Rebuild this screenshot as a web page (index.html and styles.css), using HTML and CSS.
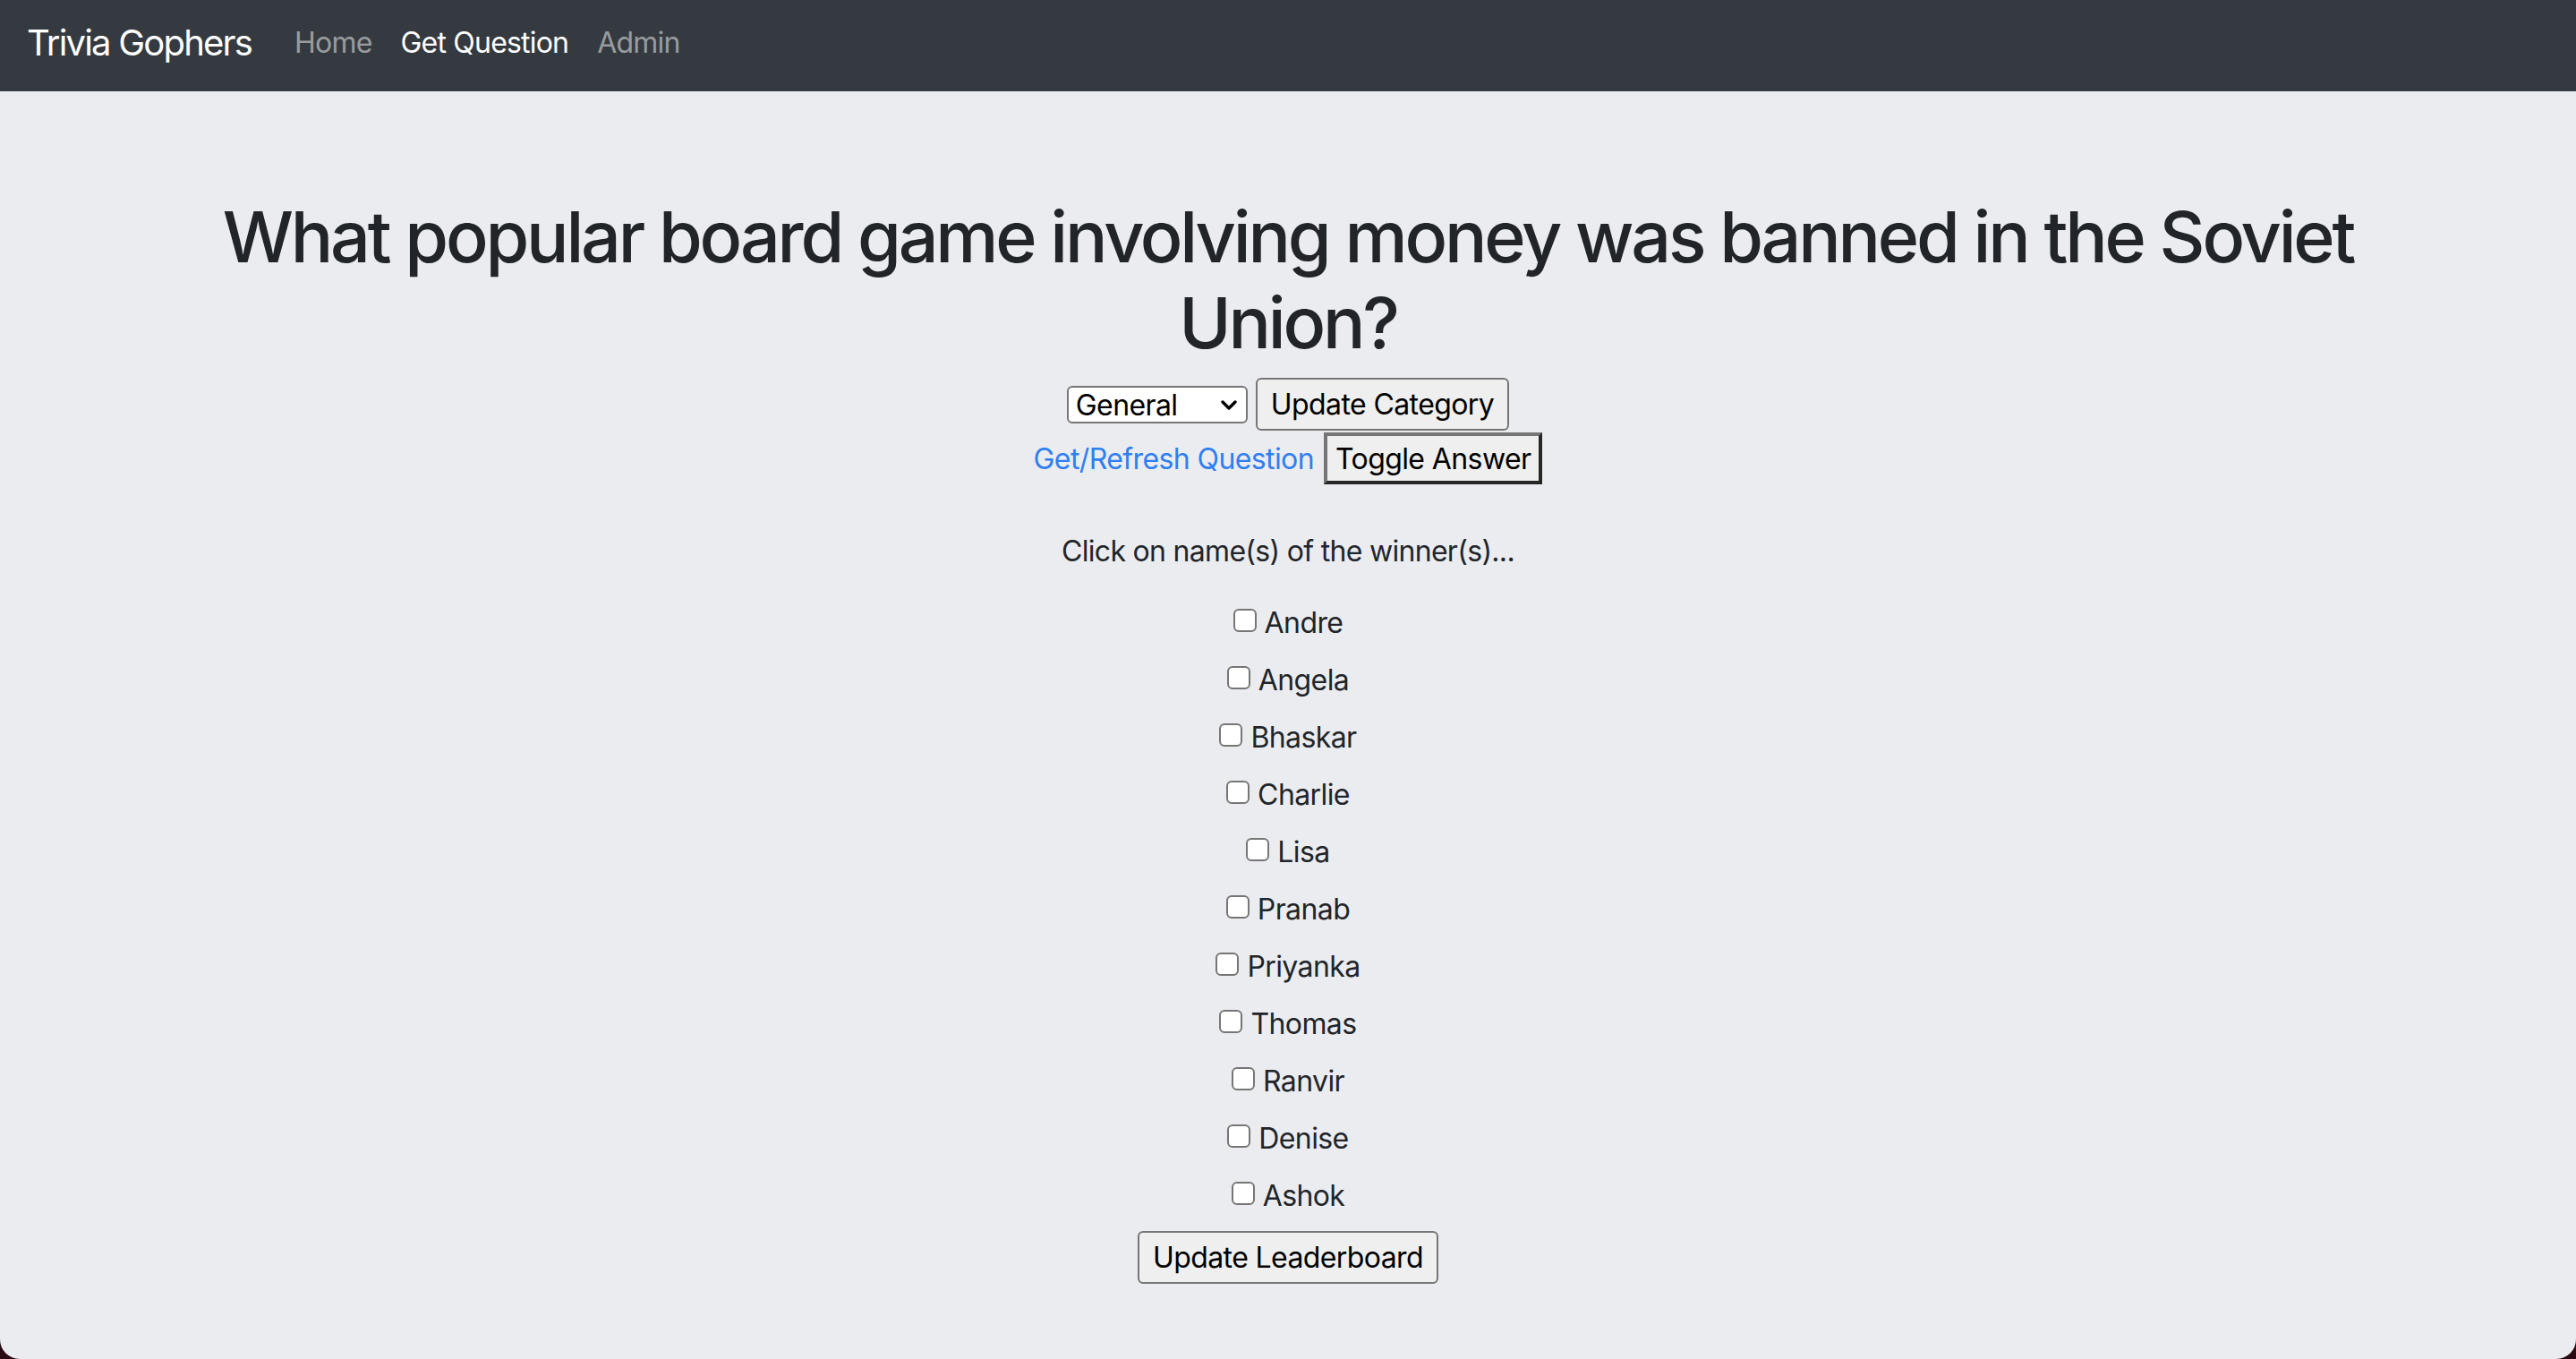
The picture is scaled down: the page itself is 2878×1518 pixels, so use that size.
FILE: index.html
```html
<!DOCTYPE html>
<html lang="en">
<head>
<meta charset="utf-8">
<title>Trivia Gophers</title>
<link rel="stylesheet" href="styles.css">
</head>
<body>
<div class="window">
  <nav class="navbar">
    <a class="brand" href="#">Trivia Gophers</a>
    <a class="nav-link" href="#">Home</a>
    <a class="nav-link active" href="#">Get Question</a>
    <a class="nav-link" href="#">Admin</a>
  </nav>
  <main class="content">
    <h1 class="question">What popular board game involving money was banned in the Soviet Union?</h1>
    <div class="row row-category">
      <div class="select-wrap">
        <select class="select">
          <option>General</option>
        </select>
        <svg class="chevron" width="18" height="12" viewBox="0 0 18 12"><path d="M2 2 L9 9 L16 2" fill="none" stroke="#000" stroke-width="3.4" stroke-linecap="round" stroke-linejoin="round"/></svg>
      </div>
      <button class="btn">Update Category</button>
    </div>
    <div class="row row-refresh">
      <a class="link" href="#">Get/Refresh Question</a>
      <button class="btn btn-focus">Toggle Answer</button>
    </div>
    <p class="prompt">Click on name(s) of the winner(s)...</p>
    <div class="names">
      <label class="name"><input type="checkbox" class="check"><span>Andre</span></label>
      <label class="name"><input type="checkbox" class="check"><span>Angela</span></label>
      <label class="name"><input type="checkbox" class="check"><span>Bhaskar</span></label>
      <label class="name"><input type="checkbox" class="check"><span>Charlie</span></label>
      <label class="name"><input type="checkbox" class="check"><span>Lisa</span></label>
      <label class="name"><input type="checkbox" class="check"><span>Pranab</span></label>
      <label class="name"><input type="checkbox" class="check"><span>Priyanka</span></label>
      <label class="name"><input type="checkbox" class="check"><span>Thomas</span></label>
      <label class="name"><input type="checkbox" class="check"><span>Ranvir</span></label>
      <label class="name"><input type="checkbox" class="check"><span>Denise</span></label>
      <label class="name"><input type="checkbox" class="check"><span>Ashok</span></label>
    </div>
    <div class="row row-submit">
      <button class="btn">Update Leaderboard</button>
    </div>
  </main>
</div>
</body>
</html>
```

FILE: styles.css
```css
html {
  background: #2b0b12;
}
body {
  margin: 0;
  font-family: Inter, "Noto Sans", sans-serif;
  color: #212529;
}
.window {
  height: 1518px;
  background: #ebecf0;
  border-radius: 0 0 22px 22px;
  overflow: hidden;
}
.navbar {
  height: 102px;
  background: #343a40;
  display: flex;
  align-items: center;
  padding: 0 30px 8px;
  box-sizing: border-box;
}
.brand {
  color: #fff;
  font-size: 40px;
  text-decoration: none;
  margin-right: 32px;
  letter-spacing: -1.8px;
}
.nav-link {
  color: rgba(255, 255, 255, 0.5);
  font-size: 32px;
  text-decoration: none;
  padding: 0 16px;
  letter-spacing: -0.8px;
}
.nav-link.active {
  color: #fff;
}
.content {
  text-align: center;
  padding-top: 114px;
}
.question {
  font-size: 79px;
  font-weight: 500;
  line-height: 96px;
  margin: 0 auto 13px;
  max-width: 2592px;
  letter-spacing: -3.2px;
}
.row {
  display: flex;
  justify-content: center;
  align-items: center;
}
.row-category {
  height: 61px;
  gap: 9px;
}
.row-refresh {
  height: 60px;
  gap: 11px;
}
.select-wrap {
  position: relative;
  width: 202px;
  height: 42px;
}
.select {
  appearance: none;
  width: 100%;
  height: 100%;
  border: 2px solid #767676;
  border-radius: 6px;
  background: #fff;
  font-family: Inter, sans-serif;
  font-size: 32px;
  color: #000;
  padding: 0 0 0 8px;
  box-sizing: border-box;
  letter-spacing: -0.6px;
}
.chevron {
  position: absolute;
  right: 12px;
  top: 16px;
  pointer-events: none;
}
.btn {
  font-family: Inter, sans-serif;
  font-size: 32px;
  color: #000;
  background: #efefef;
  border: 2px solid #767676;
  border-radius: 6px;
  height: 59px;
  padding: 0 15px;
  letter-spacing: -0.6px;
  white-space: nowrap;
}
.btn-focus {
  border-width: 4px;
  border-style: solid;
  border-color: #767676 #262626 #262626 #767676;
  border-radius: 0;
  height: 58px;
  padding: 0 9px;
}
.link {
  color: #2f7ff2;
  font-size: 32px;
  text-decoration: none;
  letter-spacing: -0.6px;
}
.prompt {
  font-size: 32px;
  line-height: 48px;
  margin: 50px 0 23px;
  letter-spacing: -0.7px;
}
.names {
  display: flex;
  flex-direction: column;
  align-items: center;
}
.name {
  height: 64px;
  display: flex;
  align-items: center;
  gap: 9px;
  font-size: 32px;
  letter-spacing: -0.6px;
}
.check {
  appearance: none;
  width: 26px;
  height: 26px;
  margin: 0;
  border: 2px solid #767676;
  border-radius: 6px;
  background: #fff;
  box-sizing: border-box;
  position: relative;
  top: -2px;
}
.row-submit {
  margin-top: 8px;
}
```
